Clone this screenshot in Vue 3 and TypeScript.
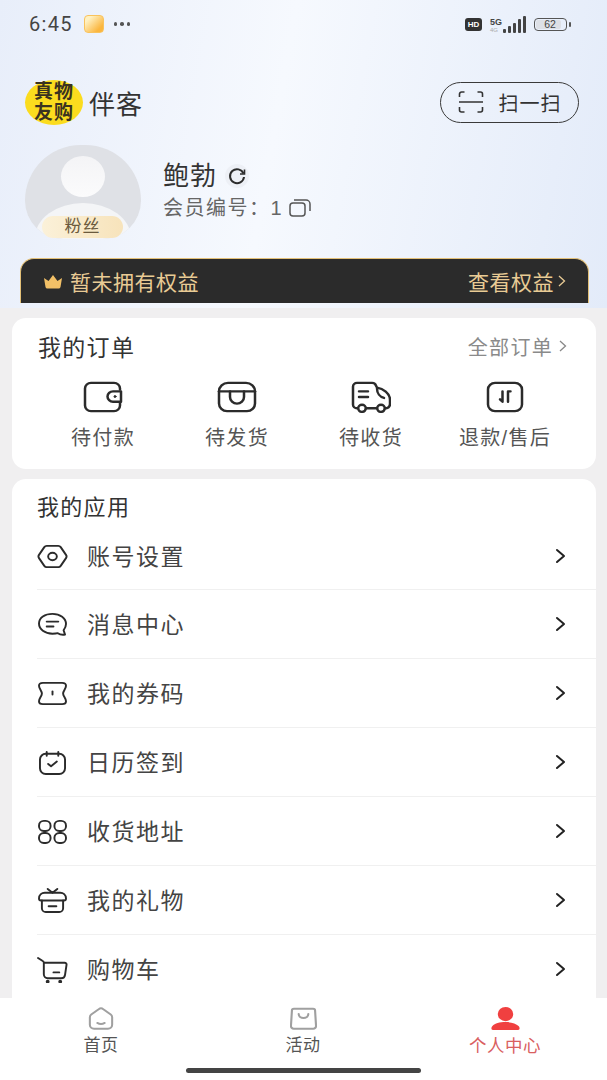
<script setup lang="ts">
const orders = [
  { label: '待付款', icon: 'wallet' },
  { label: '待发货', icon: 'box' },
  { label: '待收货', icon: 'truck' },
  { label: '退款/售后', icon: 'refund' },
]

const apps = [
  { label: '账号设置', icon: 'setting' },
  { label: '消息中心', icon: 'message' },
  { label: '我的券码', icon: 'ticket' },
  { label: '日历签到', icon: 'calendar' },
  { label: '收货地址', icon: 'grid' },
  { label: '我的礼物', icon: 'gift' },
  { label: '购物车', icon: 'cart' },
]

const bars = [4, 7, 10, 14, 17]
</script>

<template>
  <div class="page">
    <header class="hero">
      <div class="status">
        <span class="time">6:45</span>
        <span class="notice"></span>
        <span class="dots"><i></i><i></i><i></i></span>
        <span class="status-right">
          <span class="hd">HD</span>
          <span class="net">
            <span class="net-text">5G<small>4G</small></span>
            <span class="bars">
              <i v-for="b in bars" :key="b" :style="{ height: b + 'px' }"></i>
            </span>
          </span>
          <span class="battery"><span>62</span></span>
          <span class="battery-cap"></span>
        </span>
      </div>

      <div class="brand">
        <div class="logo">
          <span>真物</span>
          <span>友购</span>
        </div>
        <span class="brand-name">伴客</span>
        <button class="scan">
          <svg width="26" height="22" viewBox="0 0 26 22" fill="none" stroke="#333" stroke-width="1.6">
            <path d="M1.500 6V3a2 2 0 0 1 2-2h3M19.500 1h3a2 2 0 0 1 2 2v3M1.500 16v3a2 2 0 0 0 2 2h3M19.500 21h3a2 2 0 0 0 2-2v-3M1 11h24" />
          </svg>
          <span>扫一扫</span>
        </button>
      </div>

      <div class="profile">
        <div class="avatar">
          <div class="avatar-circle">
            <div class="avatar-head"></div>
            <div class="avatar-body"></div>
          </div>
          <span class="fans">粉丝</span>
        </div>
        <div class="info">
          <div class="name">
            <span>鲍勃</span>
            <span class="refresh">
              <svg width="20" height="20" viewBox="0 0 20 20" fill="none" stroke="#2c2c2c" stroke-width="2">
                <path d="M16.500 7.500A7 7 0 1 0 17 11" />
                <path d="M17.500 3.500v4.500h-4.500" stroke-width="1.600" />
              </svg>
            </span>
          </div>
          <div class="member">
            <span>会员编号：1</span>
            <svg width="22" height="18" viewBox="0 0 22 18" fill="none" stroke="#555" stroke-width="1.500">
              <rect x="1" y="4" width="15" height="13" rx="3" />
              <path d="M5 1h12a4 4 0 0 1 4 4v7" />
            </svg>
          </div>
        </div>
      </div>

      <div class="vip">
        <div class="vip-left">
          <svg width="20" height="15" viewBox="0 0 20 15">
            <path d="M1 4l4.500 3L10 1l4.500 6L19 4l-1.500 9a2 2 0 0 1-2 1.500h-11a2 2 0 0 1-2-1.500z" fill="#f2c067" />
          </svg>
          <span>暂未拥有权益</span>
        </div>
        <div class="vip-right">
          <span>查看权益</span>
          <svg width="8" height="12" viewBox="0 0 8 12" fill="none" stroke="#e9cb95" stroke-width="1.300">
            <path d="M1 1l5.500 5L1 11" />
          </svg>
        </div>
      </div>
    </header>

    <main class="content">
      <section class="card orders">
        <div class="orders-head">
          <span class="card-title">我的订单</span>
          <span class="all">
            全部订单
            <svg width="8" height="12" viewBox="0 0 8 12" fill="none" stroke="#888" stroke-width="1.300">
              <path d="M1 1l5.500 5L1 11" />
            </svg>
          </span>
        </div>
        <div class="order-grid">
          <div v-for="o in orders" :key="o.label" class="order-item">
            <svg width="40" height="32" viewBox="0 0 40 34" preserveAspectRatio="none" fill="none" stroke="#2b2b2b" stroke-width="2.500" stroke-linecap="round" stroke-linejoin="round">
              <template v-if="o.icon === 'wallet'">
                <path d="M37 9V8a6 6 0 0 0-6-6H8a6 6 0 0 0-6 6v18a6 6 0 0 0 6 6h23a6 6 0 0 0 6-6v-3" />
                <path d="M38 11H30a5.500 5.500 0 0 0 0 11h8z" />
                <circle cx="32" cy="16.500" r="1" fill="#2b2b2b" stroke-width="1" />
              </template>
              <template v-else-if="o.icon === 'box'">
                <path d="M11 2h18a9 9 0 0 1 9 9v13a8 8 0 0 1-8 8H10a8 8 0 0 1-8-8V11a9 9 0 0 1 9-9z" />
                <path d="M2 11h36" />
                <path d="M13 11v6a7 7 0 0 0 14 0v-6" />
              </template>
              <template v-else-if="o.icon === 'truck'">
                <path d="M7 29H6a4 4 0 0 1-4-4V6a4 4 0 0 1 4-4h15a4 4 0 0 1 4 3l1 2c6 1 13 6 13 13v4a5 5 0 0 1-4 5h-1M15 29h11" />
                <circle cx="11" cy="29" r="3.800" />
                <circle cx="30" cy="29" r="3.800" />
                <path d="M8 11h9M8 17h9M26 8c0 5 3 9 7 10" />
              </template>
              <template v-else>
                <rect x="3" y="2" width="34" height="30" rx="7" />
                <path d="M17.500 11v11l-2.500-2.500" />
                <path d="M23 22V11h2.500" />
              </template>
            </svg>
            <span>{{ o.label }}</span>
          </div>
        </div>
      </section>

      <section class="card apps">
        <div class="card-title apps-title">我的应用</div>
        <div v-for="a in apps" :key="a.label" class="app-row">
          <svg class="app-icon" width="31" height="27" viewBox="0 0 32 28" fill="none" stroke="#2b2b2b" stroke-width="2" stroke-linecap="round" stroke-linejoin="round">
            <template v-if="a.icon === 'setting'">
              <path d="M10 3h12a3 3 0 0 1 2.500 1.300l5.500 8a3 3 0 0 1 0 3.400l-5.500 8A3 3 0 0 1 22 25H10a3 3 0 0 1-2.500-1.300l-5.500-8a3 3 0 0 1 0-3.400l5.500-8A3 3 0 0 1 10 3z" />
              <ellipse cx="16" cy="14" rx="4.500" ry="3.800" />
            </template>
            <template v-else-if="a.icon === 'message'">
              <path d="M16 3c8 0 14 4.500 14 10.500 0 2.500-1 4.500-2.500 6.500l1.500 4.500c-3 .5-5.500 0-7.500-1.500-1.500.4-3.500.5-5.500.5-8 0-14-4.500-14-10.500S8 3 16 3z" />
              <path d="M10 11h12M10 16h7" />
            </template>
            <template v-else-if="a.icon === 'ticket'">
              <path d="M6 3h20c2 0 4 1 4 3 0 3-3 5-3 8s3 5 3 8c0 2-2 3-4 3H6c-2 0-4-1-4-3 0-3 3-5 3-8S2 9 2 6c0-2 2-3 4-3z" />
              <path d="M16 12v3" />
            </template>
            <template v-else-if="a.icon === 'calendar'">
              <rect x="3" y="5" width="26" height="21" rx="6" />
              <path d="M10 3v4M22 3v4M11.500 15.500l3 2.500 6-5" />
            </template>
            <template v-else-if="a.icon === 'grid'">
              <rect x="2" y="3" width="12" height="10.500" rx="5" />
              <rect x="18" y="3" width="12" height="10.500" rx="5" />
              <rect x="2" y="15.500" width="12" height="10.500" rx="5" />
              <rect x="18" y="15.500" width="12" height="10.500" rx="5" />
            </template>
            <template v-else-if="a.icon === 'gift'">
              <path d="M11 2l5 4 5-4" />
              <path d="M2 12c0-4 3-6 6-6h16c3 0 6 2 6 6 0 1.500-.8 2-2 2H4c-1.200 0-2-.5-2-2z" />
              <path d="M5 14v8a4 4 0 0 0 4 4h14a4 4 0 0 0 4-4v-8M12 20h8" />
            </template>
            <template v-else>
              <path d="M1 2l4.500 3a2 2 0 0 1 1.500 2v12a4 4 0 0 0 4 4h14a4 4 0 0 0 4-3.500l1.500-10a2 2 0 0 0-2-2.500H7" />
              <path d="M17 17h6" />
              <circle cx="11" cy="26.500" r="1" fill="#2b2b2b" />
              <circle cx="24" cy="26.500" r="1" fill="#2b2b2b" />
            </template>
          </svg>
          <span class="app-label">{{ a.label }}</span>
          <svg class="app-arrow" width="11" height="16" viewBox="0 0 11 16" fill="none" stroke="#222" stroke-width="2" stroke-linecap="round" stroke-linejoin="round">
            <path d="M2 2l7 6-7 6" />
          </svg>
        </div>
      </section>
    </main>

    <nav class="tabbar">
      <div class="tab">
        <svg width="26" height="23" viewBox="0 0 28 26" preserveAspectRatio="none" fill="none" stroke="#a0a0a0" stroke-width="2.200" stroke-linecap="round" stroke-linejoin="round">
          <path d="M11.500 2.500a4 4 0 0 1 5 0l8 6a4 4 0 0 1 1.500 3V20a4.500 4.500 0 0 1-4.500 4.500h-15A4.500 4.500 0 0 1 2 20v-8.500a4 4 0 0 1 1.500-3z" />
          <path d="M10 18c2.500 1.500 5.500 1.500 8 0" />
        </svg>
        <span>首页</span>
      </div>
      <div class="tab">
        <svg width="27" height="23" viewBox="0 0 28 26" preserveAspectRatio="none" fill="none" stroke="#a0a0a0" stroke-width="2.200" stroke-linecap="round" stroke-linejoin="round">
          <path d="M4 2h20a2 2 0 0 1 2 2l1 17a3 3 0 0 1-3 3.500H4A3 3 0 0 1 1 21L2 4a2 2 0 0 1 2-2z" />
          <path d="M9 8c0 6 10 6 10 0" />
        </svg>
        <span>活动</span>
      </div>
      <div class="tab active">
        <svg width="29" height="23" viewBox="0 0 30 26" preserveAspectRatio="none" fill="#f04040">
          <circle cx="15" cy="8" r="8" />
          <path d="M2 26c-2 0-2-3-.5-4.500C4 18.500 9 17 15 17s11 1.500 13.500 4.500C30 23 30 26 28 26z" />
        </svg>
        <span>个人中心</span>
      </div>
      <div class="home-bar"></div>
    </nav>
  </div>
</template>

<style scoped>
.page {
  width: 607px;
  height: 1080px;
  display: flex;
  flex-direction: column;
  overflow: hidden;
  background: #f0eff0;
  font-family: "Liberation Sans", "Noto Sans CJK SC", sans-serif;
  color: #333;
}

.hero {
  height: 308px;
  flex: none;
  padding: 0 18px 0 20px;
  box-sizing: border-box;
  background: linear-gradient(100deg, #e8eefa 0%, #f6f9fe 45%, #e3ebf9 100%);
  display: flex;
  flex-direction: column;
}

.status {
  height: 48px;
  padding-left: 9px;
  display: flex;
  align-items: center;
  gap: 11px;
}

.time {
  font-size: 20px;
  font-weight: 400;
  letter-spacing: 1.300px;
  color: #444;
  font-family: Roboto, sans-serif;
}

.notice {
  width: 20px;
  height: 18px;
  border-radius: 4px;
  background: linear-gradient(135deg, #fff0c0 20%, #fbb63e 80%);
  border: 1px solid #f9c35d;
  box-sizing: border-box;
}

.dots {
  display: flex;
  gap: 3px;
  margin-left: -1px;
}

.dots i {
  width: 3.500px;
  height: 3.500px;
  border-radius: 50%;
  background: #555;
}

.status-right {
  margin-left: auto;
  margin-right: 18px;
  display: flex;
  align-items: center;
}

.hd {
  width: 17px;
  height: 13px;
  border-radius: 3px;
  background: #333;
  color: #fff;
  font-size: 8px;
  font-weight: 700;
  line-height: 13px;
  text-align: center;
}

.net {
  display: flex;
  align-items: flex-end;
  gap: 1px;
  margin-left: 8px;
}

.net-text {
  display: flex;
  flex-direction: column;
  font-size: 9px;
  line-height: 10px;
  font-weight: 700;
  color: #444;
}

.net-text small {
  font-size: 6px;
  line-height: 6px;
  font-weight: 400;
  color: #aaa;
}

.bars {
  display: flex;
  align-items: flex-end;
  gap: 2px;
}

.bars i {
  width: 3px;
  background: #444;
  border-radius: 1px;
}

.battery {
  margin-left: 8px;
  width: 33px;
  height: 13px;
  border: 1px solid #555;
  border-radius: 4px;
  box-sizing: border-box;
  padding: 1px;
  display: flex;
}

.battery span {
  width: 22px;
  background: #dde0e6;
  border-radius: 2px;
  font-size: 10.500px;
  line-height: 9px;
  text-align: center;
  color: #444;
  padding-left: 3px;
}

.battery-cap {
  width: 2px;
  height: 5px;
  margin-left: 2px;
  background: #555;
  border-radius: 1px;
}

.brand {
  margin-top: 31px;
  padding: 0 10px 0 5px;
  height: 46px;
  display: flex;
  align-items: center;
}

.logo {
  width: 58px;
  height: 45px;
  border-radius: 50%;
  background: #fbdc1e;
  display: flex;
  flex-direction: column;
  align-items: center;
  justify-content: center;
  font-size: 19px;
  line-height: 21px;
  font-weight: 700;
  letter-spacing: 1px;
  color: #3a3320;
}

.brand-name {
  margin-left: 6px;
  font-size: 26px;
  letter-spacing: 1px;
  color: #333;
}

.scan {
  margin-left: auto;
  width: 139px;
  height: 41px;
  border: 1.500px solid #3a3a3a;
  border-radius: 21px;
  background: transparent;
  display: flex;
  align-items: center;
  justify-content: center;
  gap: 15px;
  padding: 0;
  font-family: inherit;
  font-size: 20px;
  letter-spacing: 1px;
  color: #333;
}

.profile {
  margin-top: 20px;
  padding-left: 5px;
  display: flex;
}

.avatar {
  position: relative;
  width: 116px;
  height: 94px;
}

.avatar-circle {
  position: relative;
  height: 94px;
  overflow: hidden;
  border-radius: 58px 58px 40px 40px;
  background: #dfe1e6;
}

.avatar-head {
  position: absolute;
  left: 36px;
  top: 11px;
  width: 44px;
  height: 41px;
  border-radius: 50%;
  background: linear-gradient(#f4f4f6, #fbfbfc);
}

.avatar-body {
  position: absolute;
  left: 10px;
  top: 58px;
  width: 96px;
  height: 70px;
  border-radius: 50%;
  background: #f4f5f7;
}

.fans {
  position: absolute;
  left: 17px;
  top: 71px;
  width: 81px;
  height: 22px;
  border-radius: 11px;
  background: linear-gradient(90deg, #fbf1d9, #f7e3bb);
  font-size: 17px;
  line-height: 22px;
  text-align: center;
  letter-spacing: 1px;
  color: #6b5a3d;
}

.info {
  margin-left: 22px;
  padding-top: 16px;
}

.name {
  display: flex;
  align-items: center;
  gap: 8px;
  font-size: 26px;
  letter-spacing: 1px;
  line-height: 30px;
  color: #333;
}

.refresh {
  width: 24px;
  height: 24px;
  border-radius: 50%;
  background: #edf0f6;
  display: flex;
  align-items: center;
  justify-content: center;
}

.member {
  margin-top: 4px;
  display: flex;
  align-items: center;
  gap: 6px;
  font-size: 20px;
  letter-spacing: 1.500px;
  line-height: 26px;
  color: #666;
}

.vip {
  margin-top: 19px;
  height: 45px;
  flex: none;
  box-sizing: border-box;
  background: #2b2b2b;
  border: 1px solid #e3c078;
  border-bottom: none;
  border-radius: 14px 14px 0 0;
  padding: 0 22px 0 22px;
  display: flex;
  align-items: center;
  justify-content: space-between;
  font-size: 21px;
  color: #e9cb95;
}

.vip-left,
.vip-right {
  display: flex;
  align-items: center;
  gap: 7px;
  letter-spacing: 0.500px;
}

.vip-right {
  gap: 4px;
}

.content {
  flex: 1;
  min-height: 0;
  padding: 10px 11px 0 12px;
  overflow: hidden;
  display: flex;
  flex-direction: column;
  gap: 10px;
}

.card {
  background: #fff;
  border-radius: 14px;
  flex: none;
}

.orders {
  height: 151px;
  padding: 0 27px 0 26px;
  box-sizing: border-box;
}

.orders-head {
  height: 58px;
  padding-bottom: 2px;
  box-sizing: border-box;
  display: flex;
  align-items: center;
  justify-content: space-between;
}

.card-title {
  font-size: 23px;
  letter-spacing: 1.300px;
  color: #333;
}

.all {
  display: flex;
  align-items: center;
  gap: 6px;
  font-size: 20px;
  letter-spacing: 1.300px;
  color: #8a8a8a;
  margin-left: auto;
  margin-right: 2px;
}

.order-grid {
  display: grid;
  grid-template-columns: repeat(4, 134px);
  margin: 5px 0 0 -2px;
}

.order-item {
  display: flex;
  flex-direction: column;
  align-items: center;
  gap: 15px;
  font-size: 20px;
  letter-spacing: 1.300px;
  line-height: 20px;
  color: #555;
}

.apps {
  padding-left: 25px;
  padding-top: 14px;
  padding-bottom: 20px;
}

.apps-title {
  height: 30px;
  line-height: 30px;
  font-size: 22px;
}

.app-row {
  height: 69px;
  box-sizing: border-box;
  border-bottom: 1px solid #f0f0f0;
  display: flex;
  align-items: center;
  padding-right: 30px;
}

.apps-title + .app-row {
  height: 67px;
}

.app-icon {
  flex: none;
}

.app-label {
  margin: -2px 0 0 19px;
  font-size: 23px;
  letter-spacing: 1.500px;
  color: #444;
}

.app-arrow {
  margin-left: auto;
}

.tabbar {
  position: relative;
  z-index: 1;
  flex: none;
  height: 82px;
  background: #fff;
  display: grid;
  grid-template-columns: repeat(3, 202px);
}

.tab {
  padding-top: 9px;
  display: flex;
  flex-direction: column;
  align-items: center;
  gap: 6px;
  font-size: 17px;
  letter-spacing: 0.500px;
  line-height: 20px;
  color: #555;
}

.tab.active {
  color: #d9605f;
  font-size: 17.500px;
}

.home-bar {
  position: absolute;
  left: 186px;
  bottom: 7px;
  width: 235px;
  height: 5px;
  border-radius: 3px;
  background: #444;
}
</style>

<style>
html,
body {
  margin: 0;
  background: #f0eff0;
}
</style>
